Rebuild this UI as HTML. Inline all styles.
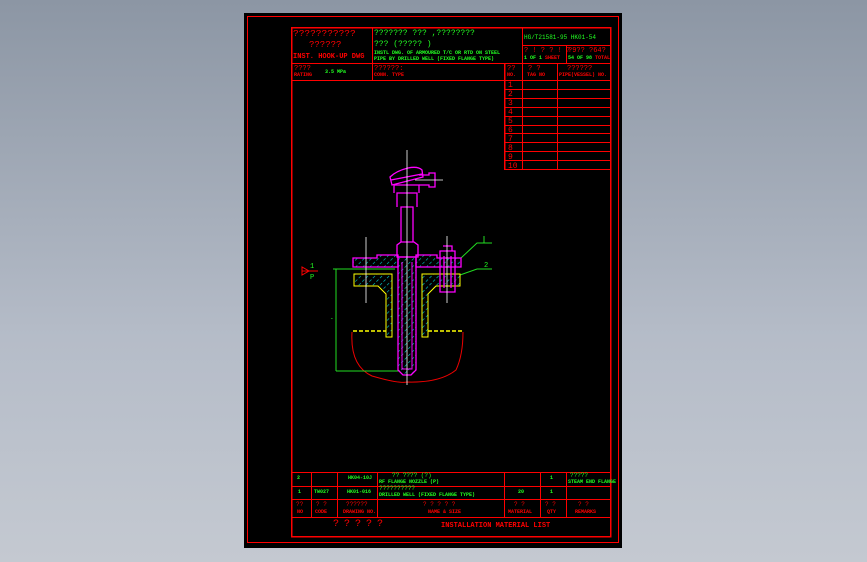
<!DOCTYPE html>
<html><head><meta charset="utf-8"><style>
html,body{margin:0;padding:0}
body{width:867px;height:562px;overflow:hidden;background:linear-gradient(#8c96a4,#b5bcc8 60%,#c4c9d1);position:relative;font-family:"Liberation Mono",monospace}
#p{position:absolute;left:244px;top:13px;width:378px;height:535px;background:#000}
svg{position:absolute;left:0;top:0}
.t{position:absolute;white-space:nowrap;font-size:8px;line-height:8px}
.r{color:#f00}.g{color:#2f2}
.s{font-size:5px;line-height:5px;font-weight:bold}
</style></head><body>
<div id="p"></div>
<svg width="867" height="562" viewBox="0 0 867 562">
<defs>
<pattern id="h" width="5" height="5" patternUnits="userSpaceOnUse" patternTransform="rotate(45)">
<line x1="0" y1="0" x2="0" y2="5" stroke="#0cc" stroke-width="1.2" stroke-dasharray="3,2"/></pattern>
</defs>
<g stroke="#f00" stroke-width="1.2" fill="none" shape-rendering="crispEdges">
<rect x="247.5" y="16.5" width="371" height="526"/>
<rect x="291.5" y="27.5" width="319" height="509" stroke-width="1.5"/>
<line x1="291" y1="63.5" x2="610" y2="63.5"/>
<line x1="291" y1="80.5" x2="610" y2="80.5"/>
<line x1="372.5" y1="27" x2="372.5" y2="80"/>
<line x1="522.5" y1="27" x2="522.5" y2="169"/>
<line x1="522" y1="45.5" x2="610" y2="45.5"/>
<line x1="566.5" y1="45" x2="566.5" y2="63"/>
<line x1="504.5" y1="63" x2="504.5" y2="169" stroke-width="1.5"/>
<line x1="557.5" y1="63" x2="557.5" y2="169"/>
<line x1="504" y1="89.5" x2="610" y2="89.5"/><line x1="504" y1="98.5" x2="610" y2="98.5"/>
<line x1="504" y1="107.5" x2="610" y2="107.5"/><line x1="504" y1="116.5" x2="610" y2="116.5"/>
<line x1="504" y1="125.5" x2="610" y2="125.5"/><line x1="504" y1="133.5" x2="610" y2="133.5"/>
<line x1="504" y1="142.5" x2="610" y2="142.5"/><line x1="504" y1="151.5" x2="610" y2="151.5"/>
<line x1="504" y1="160.5" x2="610" y2="160.5"/><line x1="504" y1="169.5" x2="610" y2="169.5"/>
<line x1="291" y1="472.5" x2="610" y2="472.5"/><line x1="291" y1="486.5" x2="610" y2="486.5"/>
<line x1="291" y1="499.5" x2="610" y2="499.5"/><line x1="291" y1="517.5" x2="610" y2="517.5"/>
<line x1="311.5" y1="472" x2="311.5" y2="517"/><line x1="337.5" y1="472" x2="337.5" y2="517"/>
<line x1="377.5" y1="472" x2="377.5" y2="517"/><line x1="504.5" y1="472" x2="504.5" y2="517"/>
<line x1="540.5" y1="472" x2="540.5" y2="517"/><line x1="566.5" y1="472" x2="566.5" y2="517"/>
</g>
<!-- drawing -->
<g fill="none" stroke-width="1">
<path d="M352 332 Q350 366 372 376 Q400 384 407 382 Q440 383 456 370 Q463 355 463 332" stroke="#e00"/>
<g stroke="#2d2">
<path d="M333 269 H395 M336 269 V371 M336 371 H400 M461 258 L477 243 H492 M484 236 V243 M460 275 L477 269 H492"/>
</g>
<!-- lower flange + nozzle yellow -->
<path d="M354 274 H392 V337 H386 V294 L378 286 H354 Z" fill="url(#h)" stroke="#ff0"/>
<path d="M460 274 H422 V337 H428 V294 L436 286 H460 Z" fill="url(#h)" stroke="#ff0"/>
<path d="M353 331 H386 M428 331 H462" stroke="#ff0" stroke-width="1.5" stroke-dasharray="4,2"/>
<!-- upper flange magenta -->
<path d="M353 258 H377 V255 H398 V267 H353 Z" fill="url(#h)" stroke="#f0f" stroke-width="1.3"/>
<path d="M461 258 H437 V255 H416 V267 H461 Z" fill="url(#h)" stroke="#f0f" stroke-width="1.3"/>
<!-- well tube -->
<path d="M398 257 V370 L403 375 H411 L416 370 V257 Z" fill="url(#h)" stroke="#f0f" stroke-width="1.3"/>
<path d="M402 262 V369 H412 V262" stroke="#f0f"/>
<g stroke="#f0f" stroke-width="1.3">
<path d="M397 257 V245 L401 242 H414 L418 245 V257 Z"/>
<path d="M401 242 V207 H413 V242 M397 207 V193 H417 V207 M394 193 V185 H419 V193"/>
<path d="M392 185 L390 177 Q396 171 408 168 Q418 166 422 170 L423 177 Z M391 180 L422 174"/>
<path d="M419 175 H429 V173 H435 V187 H429 V185 H419"/>
<path d="M440 251 H455 V292 H440 Z M443 246 H452 V251 M444 256 V288 M451 256 V288"/>
</g>
<g stroke="#fff" stroke-width="0.8">
<path d="M407 150 V385 M415 180 H443 M366 237 V303 M447 236 V303"/>
</g>
<path d="M302 271 H318 M302 267 V275 L309 271 Z" stroke="#f00"/>
</g>
</svg>
<div class="t r" style="left:293px;top:30px;font-size:9.5px">???????????</div>
<div class="t r" style="left:309px;top:41px;font-size:9px">??????</div>
<div class="t r" style="left:293px;top:53px;font-weight:bold;font-size:7px">INST. HOOK-UP DWG</div>
<div class="t g" style="left:374px;top:30px">??????? ??? ,????????</div>
<div class="t g" style="left:374px;top:41px">??? (????? )</div>
<div class="t g s" style="left:374px;top:51px">INSTL DWG. OF ARMOURED T/C OR RTD ON STEEL</div>
<div class="t g s" style="left:374px;top:57px">PIPE BY DRILLED WELL (FIXED FLANGE TYPE)</div>
<div class="t g" style="left:524px;top:34px;font-size:6px">HG/T21581-95  HK01-54</div>
<div class="t r" style="left:524px;top:47px;font-size:7px">? ! ? ? ! ?</div>
<div class="t g s" style="left:524px;top:56px">1 OF 1 <span class="r">SHEET</span></div>
<div class="t r" style="left:568px;top:47px;font-size:7px">?9?? ?64?</div>
<div class="t r s" style="left:568px;top:56px"><span class="g">54 OF 98</span> TOTAL</div>
<div class="t r" style="left:294px;top:65px;font-size:7px">????</div>
<div class="t r s" style="left:294px;top:73px">RATING</div>
<div class="t g s" style="left:325px;top:70px">3.5 MPa</div>
<div class="t r" style="left:374px;top:65px;font-size:7px">??????:</div>
<div class="t r s" style="left:374px;top:73px">CONN. TYPE</div>
<div class="t r" style="left:507px;top:65px;font-size:7px">??</div>
<div class="t r s" style="left:507px;top:73px">NO.</div>
<div class="t r" style="left:528px;top:65px;font-size:7px">?  ?</div>
<div class="t r s" style="left:527px;top:73px">TAG NO</div>
<div class="t r" style="left:567px;top:65px;font-size:7px">??????</div>
<div class="t r s" style="left:559px;top:73px">PIPE(VESSEL) NO.</div>
<div class="t r" style="left:508px;top:81px;font-size:8px;line-height:9px">1<br>2<br>3<br>4<br>5<br>6<br>7<br>8<br>9<br>10</div>
<div class="t g s" style="left:297px;top:476px">2</div>
<div class="t g s" style="left:348px;top:476px">HK04-10J</div>
<div class="t g" style="left:392px;top:472px;font-size:6px">?? ???? (?)</div>
<div class="t g s" style="left:379px;top:480px">RF FLANGE NOZZLE (P)</div>
<div class="t g s" style="left:550px;top:476px">1</div>
<div class="t g" style="left:570px;top:472px;font-size:6px">?????</div>
<div class="t g s" style="left:568px;top:480px">STEAM END FLANGE</div>
<div class="t g s" style="left:298px;top:490px">1</div>
<div class="t g s" style="left:314px;top:490px">TW027</div>
<div class="t g s" style="left:347px;top:490px">HK01-016</div>
<div class="t g" style="left:379px;top:485px;font-size:6px">??????????</div>
<div class="t g s" style="left:379px;top:493px">DRILLED WELL (FIXED FLANGE TYPE)</div>
<div class="t g s" style="left:518px;top:490px">20</div>
<div class="t g s" style="left:550px;top:490px">1</div>
<div class="t r" style="left:296px;top:501px;font-size:6px">??</div><div class="t r s" style="left:297px;top:510px">NO</div>
<div class="t r" style="left:316px;top:501px;font-size:6px">? ?</div><div class="t r s" style="left:315px;top:510px">CODE</div>
<div class="t r" style="left:346px;top:501px;font-size:6px">??????</div><div class="t r s" style="left:343px;top:510px">DRAWING NO.</div>
<div class="t r" style="left:423px;top:501px;font-size:6px">? ? ? ? ?</div><div class="t r s" style="left:428px;top:510px">NAME &amp; SIZE</div>
<div class="t r" style="left:514px;top:501px;font-size:6px">? ?</div><div class="t r s" style="left:508px;top:510px">MATERIAL</div>
<div class="t r" style="left:545px;top:501px;font-size:6px">? ?</div><div class="t r s" style="left:547px;top:510px">QTY</div>
<div class="t r" style="left:578px;top:501px;font-size:6px">? ?</div><div class="t r s" style="left:575px;top:510px">REMARKS</div>
<div class="t r" style="left:333px;top:521px;font-size:10px;letter-spacing:5px">?????</div>
<div class="t r" style="left:441px;top:522px;font-size:7px;font-weight:bold">INSTALLATION MATERIAL LIST</div>
<div class="t g" style="left:310px;top:263px;font-size:7px">1</div>
<div class="t g" style="left:310px;top:274px;font-size:7px">P</div>
<div class="t g" style="left:484px;top:262px;font-size:7px">2</div>
<div class="t g" style="left:330px;top:315px;font-size:6px">-</div>
</body></html>
